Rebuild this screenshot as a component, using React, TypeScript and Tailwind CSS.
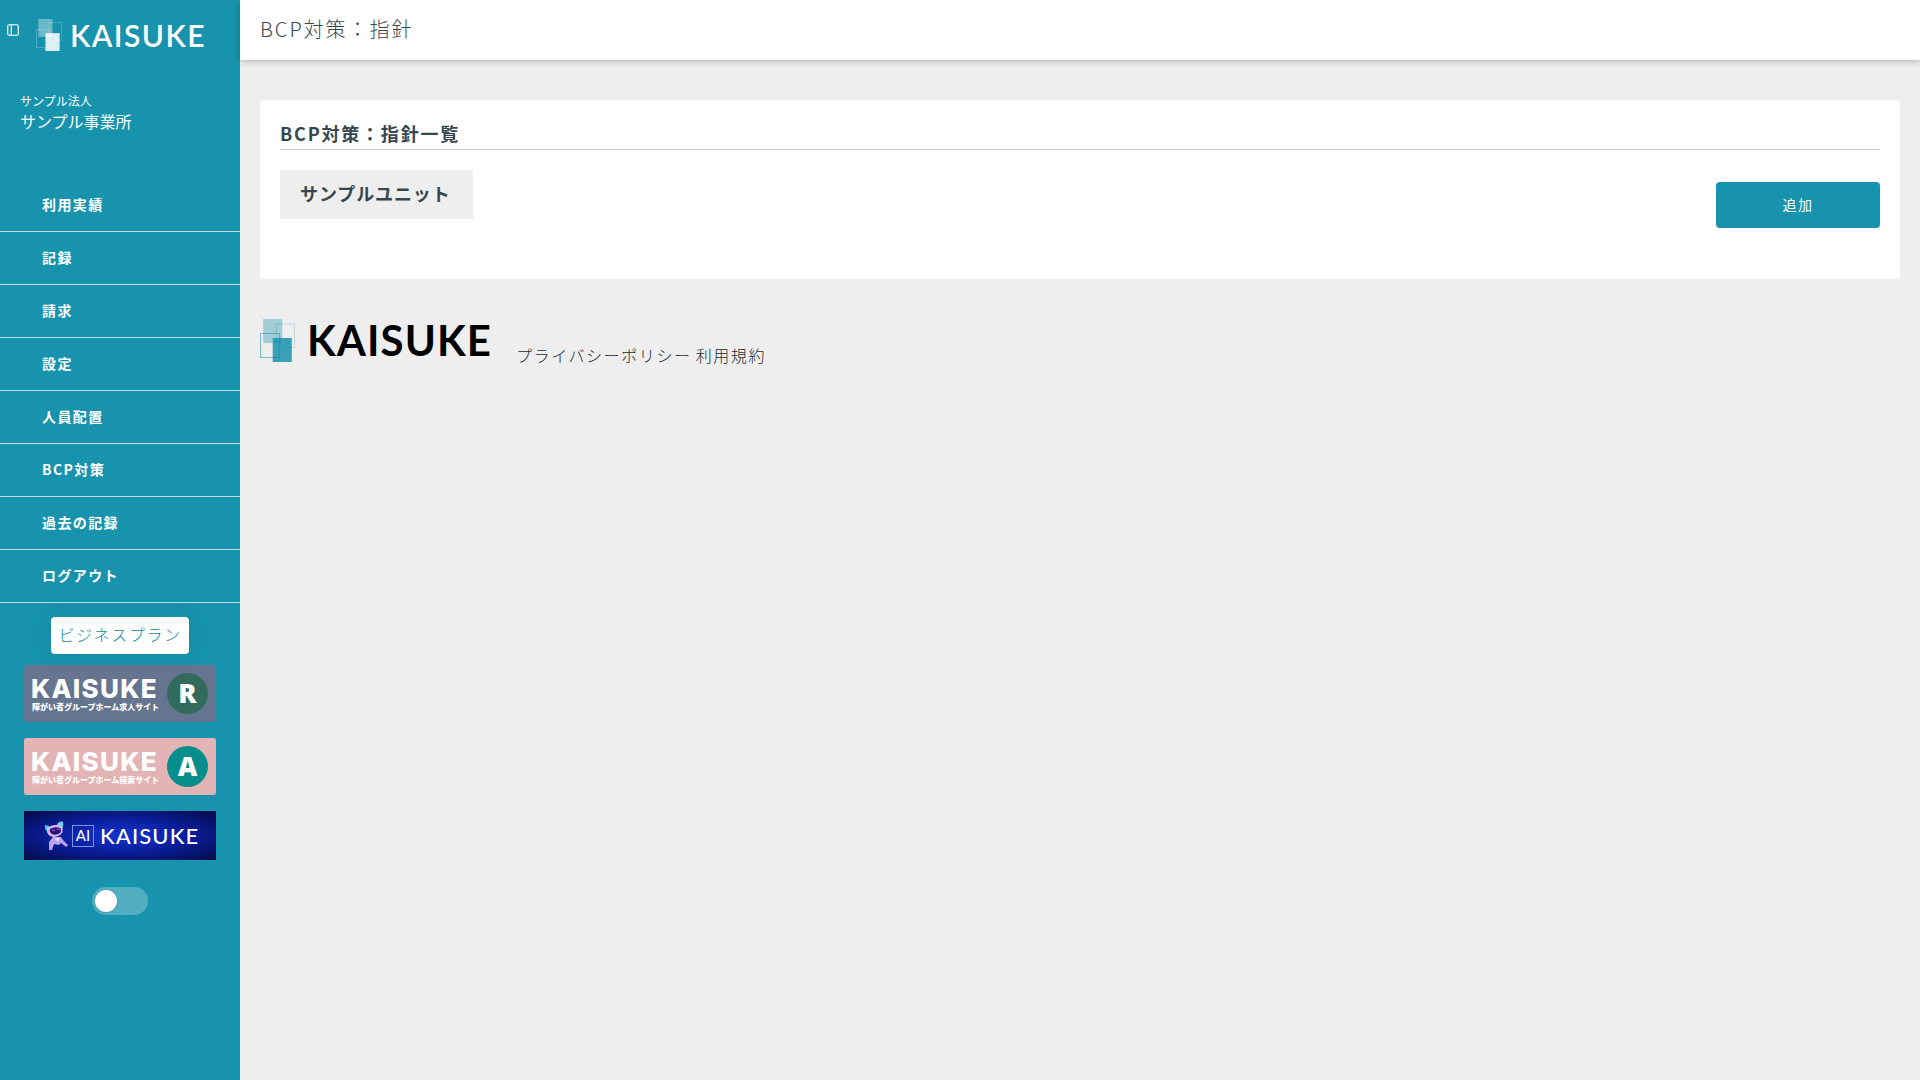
import { PanelLeft } from "lucide-react";

const NAV = ["利用実績", "記録", "請求", "設定", "人員配置", "BCP対策", "過去の記録", "ログアウト"];

function Squares({ className, light }: { className: string; light?: boolean }) {
  const main = light ? "#ffffff" : "#1893ad";
  return (
    <svg viewBox="0 0 33 43" preserveAspectRatio="none" className={className} aria-hidden>
      <rect x="3" y="0" width="18" height="24" fill={main} opacity={light ? 0.35 : 0.36} />
      <rect x="15.5" y="5" width="17" height="23.5" fill="none" stroke={main} opacity="0.22" />
      <rect x="12" y="19" width="18" height="24" fill={main} opacity="0.85" />
      <rect x="0.5" y="14.5" width="18" height="24" fill="none" stroke={light ? "#ffffff" : "#0f7f96"} opacity={light ? 0.3 : 0.5} />
    </svg>
  );
}

function Robot() {
  return (
    <svg viewBox="0 0 24 30" className="h-[30px] w-6 shrink-0" aria-hidden>
      <path d="M1 4 Q0 9 4 11 L8 7 Q4 4 1 4 Z" fill="#46c8f5" />
      <path d="M13 3 Q17 -1 19 1 Q20 6 17 9 Z" fill="#66d4f8" />
      <path d="M3 7 Q9 3 16 4 Q20 7 18 12 Q15 16 9 16 Q4 15 3 11 Z" fill="#d3b8f4" />
      <path d="M6 8 Q11 5 16 7 Q18 9 16 12 Q12 15 8 13 Q5 11 6 8 Z" fill="#25106e" />
      <path d="M8 10 Q9 8 11 10 M13 9 Q14 7 16 9" stroke="#b43ee8" fill="none" strokeWidth="1.2" />
      <path d="M9 16 L17 16 L19 19 L24 24 L22 26 L17 22 L15 24 L10 23 L8 29 L5 29 L5 21 Z" fill="#b9a2ee" />
      <path d="M10 17 L16 17 L14 21 Z" fill="#e6d6fb" />
    </svg>
  );
}

function SiteBanner({ color, circle, letter, label }: { color: string; circle: string; letter: string; label: string }) {
  return (
    <a href="#" className={`flex h-[57px] w-48 items-center justify-between rounded-[3px] pr-2 pl-[7px] text-white ${color}`}>
      <span className="flex flex-col whitespace-nowrap">
        <span className="font-['Inter'] text-[26px] leading-[26px] font-extrabold tracking-wider">KAISUKE</span>
        <span className="pl-px text-[8px] leading-[10px] font-black">{label}</span>
      </span>
      <span className={`flex size-[41px] items-center justify-center rounded-full font-['Open_Sans'] text-[27px] font-extrabold ${circle}`}>
        {letter}
      </span>
    </a>
  );
}

export default function App() {
  return (
    <div className="flex min-h-screen bg-[#eeeeee] font-['Noto_Sans_CJK_JP',sans-serif] text-[#37474f]">
      <aside className="flex w-60 shrink-0 flex-col bg-[#1893ad] text-white">
        <div className="flex h-[70px] items-center pl-[6px]">
          <button type="button" aria-label="メニュー" className="mb-[10px]">
            <PanelLeft size={14} strokeWidth={2} />
          </button>
          <a href="#" className="ml-4 flex items-center">
            <Squares light className="h-8 w-[26px]" />
            <span className="ml-2 font-['Lato'] text-[30px] leading-8 font-semibold tracking-wider">KAISUKE</span>
          </a>
        </div>

        <div className="mt-[21px] h-[88px] pl-5">
          <p className="text-xs leading-5">サンプル法人</p>
          <p className="text-base leading-5">サンプル事業所</p>
        </div>

        <nav>
          <ul>
            {NAV.map((item) => (
              <li key={item} className="border-b border-white/70">
                <a href="#" className="flex h-[52px] items-center pb-[3px] pl-[42px] text-sm font-bold tracking-widest">
                  {item}
                </a>
              </li>
            ))}
          </ul>
        </nav>

        <div className="flex flex-col items-center pt-[14px]">
          <button
            type="button"
            className="h-[37px] rounded-[4px] bg-white px-[7px] pb-[3px] text-base font-light tracking-widest text-[#0e86a0] shadow-[0_0_24px_rgba(0,0,0,0.08)]"
          >
            ビジネスプラン
          </button>
          <div className="mt-[11px] flex flex-col gap-4">
            <SiteBanner color="bg-[#66758f]" circle="bg-[#326b5c]" letter="R" label="障がい者グループホーム求人サイト" />
            <SiteBanner color="bg-[#e3b4b5]" circle="bg-[#058e8c]" letter="A" label="障がい者グループホーム検索サイト" />
            <a
              href="#"
              className="flex h-[49px] w-48 items-center bg-[radial-gradient(ellipse_at_center,#1234d0_0%,#0b20a0_45%,#030a48_100%)] pl-5"
            >
              <Robot />
              <span className="ml-1 flex size-[22px] items-center justify-center border border-[#7e93e8] font-['Lato'] text-[15px] leading-none">
                AI
              </span>
              <span className="ml-[6px] font-['Lato'] text-[22px] leading-6 font-medium tracking-wider">KAISUKE</span>
            </a>
          </div>
          <input
            type="checkbox"
            role="switch"
            aria-label="表示切替"
            className="mt-[27px] flex h-7 w-14 appearance-none items-center rounded-full bg-white/25 px-[3px] before:size-[22px] before:rounded-full before:bg-white before:shadow checked:justify-end"
          />
        </div>
      </aside>

      <div className="min-w-0 flex-1">
        <header className="flex h-[60px] items-center bg-white px-5 pb-0.5 shadow-[0_2px_6px_rgba(0,0,0,0.22)]">
          <h1 className="text-xl font-light tracking-widest">BCP対策：指針</h1>
        </header>

        <main className="px-5 pt-10">
          <section className="rounded-[4px] bg-white px-5 pt-5 pb-[51px]">
            <h2 className="border-b border-[#cccccc] pb-0.5 text-lg leading-[27px] font-bold tracking-widest">BCP対策：指針一覧</h2>
            <div className="mt-5 flex items-start justify-between">
              <h3 className="bg-[#eeeeee] pr-[22px] pb-0.5 pl-5 text-lg leading-[47px] font-bold tracking-wider">サンプルユニット</h3>
              <button
                type="button"
                className="mt-3 h-[46px] w-[164px] rounded-[4px] bg-[#1893ad] pb-0.5 text-sm tracking-widest text-white"
              >
                追加
              </button>
            </div>
          </section>

          <footer className="flex items-end pt-10">
            <a href="#" className="flex items-center text-black">
              <Squares className="h-[43px] w-[35px]" />
              <span className="ml-3 font-['Lato'] text-[42px] leading-[43px] font-bold tracking-wide">KAISUKE</span>
            </a>
            <div className="-mb-1 ml-6 flex gap-1 text-base leading-[22px] font-light tracking-widest text-[#212b30]">
              <a href="#">プライバシーポリシー</a>
              <a href="#">利用規約</a>
            </div>
          </footer>
        </main>
      </div>
    </div>
  );
}
